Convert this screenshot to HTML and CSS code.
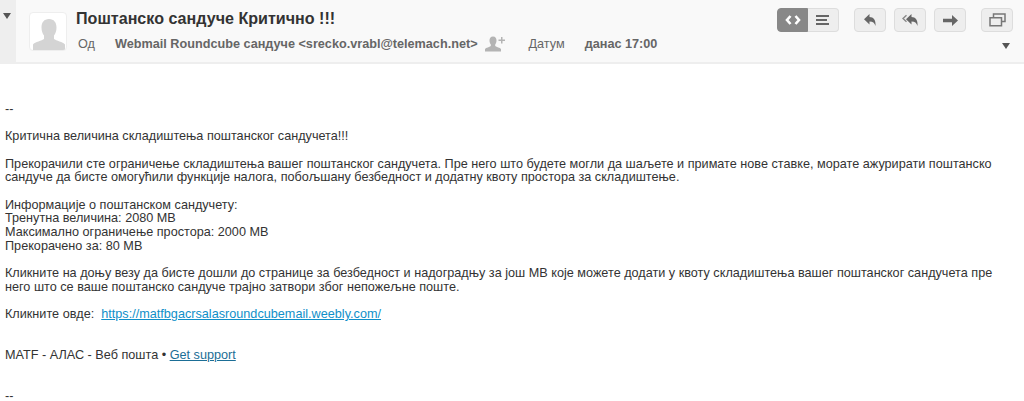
FILE: index.html
```html
<!DOCTYPE html>
<html lang="en">
<head>
  <meta charset="UTF-8" />
  <title>Поштанско сандуче Критично !!!</title>
  <link rel="stylesheet" href="styles.css">
</head>
<body>
  <header class="message-header">
    <div class="toggle-strip"><span class="caret"></span></div>
    <div class="avatar">
      <svg width="36" height="36" viewBox="0 0 36 36"><path fill="#d4d4d4" d="M18 5c-5 0-7.500 3.500-7.500 8.500 0 3.500 1 6 2.500 8v3.500c-2 1.500-9 3-11 5.500V36h32v-5.500c-2-2.500-9-4-11-5.500v-3.500c1.500-2 2.500-4.500 2.500-8C25.500 8.500 23 5 18 5z"/></svg>
    </div>
    <div class="summary">
      <h2 class="subject">Поштанско сандуче Критично !!!</h2>
      <div class="meta">
        <span class="label from-label">Од</span>
        <span class="value">Webmail Roundcube сандуче &lt;srecko.vrabl@telemach.net&gt;</span>
        <svg class="add-contact" width="21" height="16" viewBox="0 0 21 16"><path fill="#b4b4b4" d="M8 0.500c-2.500 0-3.500 1.800-3.500 4 0 1.600 0.600 3 1.300 3.900v1.600C4.500 11 1 11.700 0 13v2.500h16V13c-1-1.300-4.500-2-5.800-3V8.400c0.700-0.900 1.300-2.300 1.300-3.900 0-2.200-1-4-3.500-4z"/><path fill="#b4b4b4" d="M16 1h1.500v2.500H20V5h-2.500v2.500H16V5h-2.500V3.500H16z"/></svg>
        <span class="label date-label">Датум</span>
        <span class="value">данас 17:00</span>
      </div>
    </div>
    <div class="actions">
      <div class="button-row">
        <div class="btn-group">
          <span class="btn btn-active"><svg width="16" height="10" viewBox="0 0 16 10"><path fill="none" stroke="#fff" stroke-width="2.600" d="M5.500 1 2 5l3.500 4M10.500 1 14 5l-3.500 4"/></svg></span>
          <span class="btn"><svg width="14" height="10" viewBox="0 0 14 10"><path fill="#666" d="M0 0h13v2H0zM0 4h11v2H0zM0 8h13v2H0z"/></svg></span>
        </div>
        <span class="btn btn-single"><svg width="12" height="12" viewBox="0 0 12 12"><path fill="#666" d="M5.500 0v3c4 0 6.500 3 6 9-1-3.200-2.500-4.500-6-4.500v3L0 5.200z"/></svg></span>
        <span class="btn btn-single"><svg width="16" height="12" viewBox="0 0 16 12"><path fill="#666" d="M9.500 0v3c4 0 6.500 3 6 9-1-3.200-2.500-4.500-6-4.500v3L4 5.200z"/><path fill="none" stroke="#888" stroke-width="1.400" d="M4.500 1.200 1 4.500l3.500 3.300"/></svg></span>
        <span class="btn btn-single"><svg width="15" height="11" viewBox="0 0 15 11"><path fill="#666" d="M9 0l6 5.500-6 5.500V7.200H0V3.800h9z"/></svg></span>
        <span class="btn btn-single btn-last"><svg width="17" height="14" viewBox="0 0 17 14"><path fill="none" stroke="#777" stroke-width="1.500" d="M4.500 4V1h11.500v7.500H12.500M1 4.700h11.500v8H1z"/></svg></span>
      </div>
      <span class="caret more-caret"></span>
    </div>
  </header>

  <div class="message-body">
    <br>
    <br>
    --<br>
    <br>
    Критична величина складиштења поштанског сандучета!!!<br>
    <br>
    Прекорачили сте ограничење складиштења вашег поштанског сандучета. Пре него што будете могли да шаљете и примате нове ставке, морате ажурирати поштанско сандуче да бисте омогућили функције налога, побољшану безбедност и додатну квоту простора за складиштење.<br>
    <br>
    Информације о поштанском сандучету:<br>
    Тренутна величина: 2080 MB<br>
    Максимално ограничење простора: 2000 MB<br>
    Прекорачено за: 80 MB<br>
    <br>
    Кликните на доњу везу да бисте дошли до странице за безбедност и надоградњу за још MB које можете додати у квоту складиштења вашег поштанског сандучета пре него што се ваше поштанско сандуче трајно затвори због непожељне поште.<br>
    <br>
    Кликните овде:&nbsp; <a class="link" href="#">https://matfbgacrsalasroundcubemail.weebly.com/</a><br>
    <br>
    <br>
    MATF - АЛАС - Веб пошта • <a class="link-dark" href="#">Get support</a><br>
    <br>
    <br>
    --
  </div>
</body>
</html>
```

FILE: styles.css
```css
* {
  box-sizing: border-box;
}

html, body {
  margin: 0;
  height: 100%;
  overflow: hidden;
}

body {
  background: #fff;
  color: #333;
  font-family: "Liberation Sans", Arial, sans-serif;
  font-size: 12.660px;
}

.message-header {
  display: flex;
  height: 64px;
  background: #f9f9f9;
  border-bottom: 2px solid #eee;
}

.toggle-strip {
  width: 16px;
  background: #eeeeee;
  padding: 13px 0 0 3px;
}

.caret {
  display: block;
  width: 0;
  height: 0;
  border-left: 4.500px solid transparent;
  border-right: 4.500px solid transparent;
  border-top: 6px solid #555;
}

.avatar {
  width: 38px;
  height: 39px;
  margin: 12px 0 0 13px;
  padding: 1px;
  background: #fff;
  border: 1px solid #eee;
  border-radius: 4px;
  overflow: hidden;
}

.avatar svg {
  display: block;
}

.summary {
  margin-left: 9px;
  flex: 1;
}

.subject {
  margin: 8px 0 0;
  font-size: 16.100px;
  font-weight: bold;
  line-height: 20px;
  color: #333;
}

.meta {
  display: flex;
  align-items: center;
  margin-top: 7px;
  height: 18px;
  font-size: 12.660px;
}

.label {
  color: #666;
}

.from-label {
  width: 39px;
  padding-left: 2px;
}

.value {
  font-weight: bold;
  color: #666;
}

.add-contact {
  margin-left: 7px;
}

.date-label {
  margin-left: 23px;
  margin-right: 20px;
}

.actions {
  padding: 8px 11px 0 0;
}

.button-row {
  display: flex;
}

.btn-group {
  display: flex;
  margin-right: 15px;
}

.btn {
  display: flex;
  align-items: center;
  justify-content: center;
  width: 31px;
  height: 24px;
  background: #eee;
  border: 1px solid #ddd;
}

.btn-group .btn:first-child {
  border-radius: 4px 0 0 4px;
}

.btn-group .btn:last-child {
  border-radius: 0 4px 4px 0;
  border-left: 0;
}

.btn-active {
  background: #888;
  border-color: #888;
}

.btn-single {
  width: 32px;
  margin-right: 8px;
  border-radius: 4px;
}

.btn-last {
  margin-left: 7px;
  margin-right: 0;
}

.more-caret {
  margin: 11px 3px 0 auto;
}

.message-body {
  padding: 11.300px 5px 0;
  line-height: 13.700px;
}

.link {
  color: #0f8fc9;
}

.link-dark {
  color: #1b6e96;
}
```
